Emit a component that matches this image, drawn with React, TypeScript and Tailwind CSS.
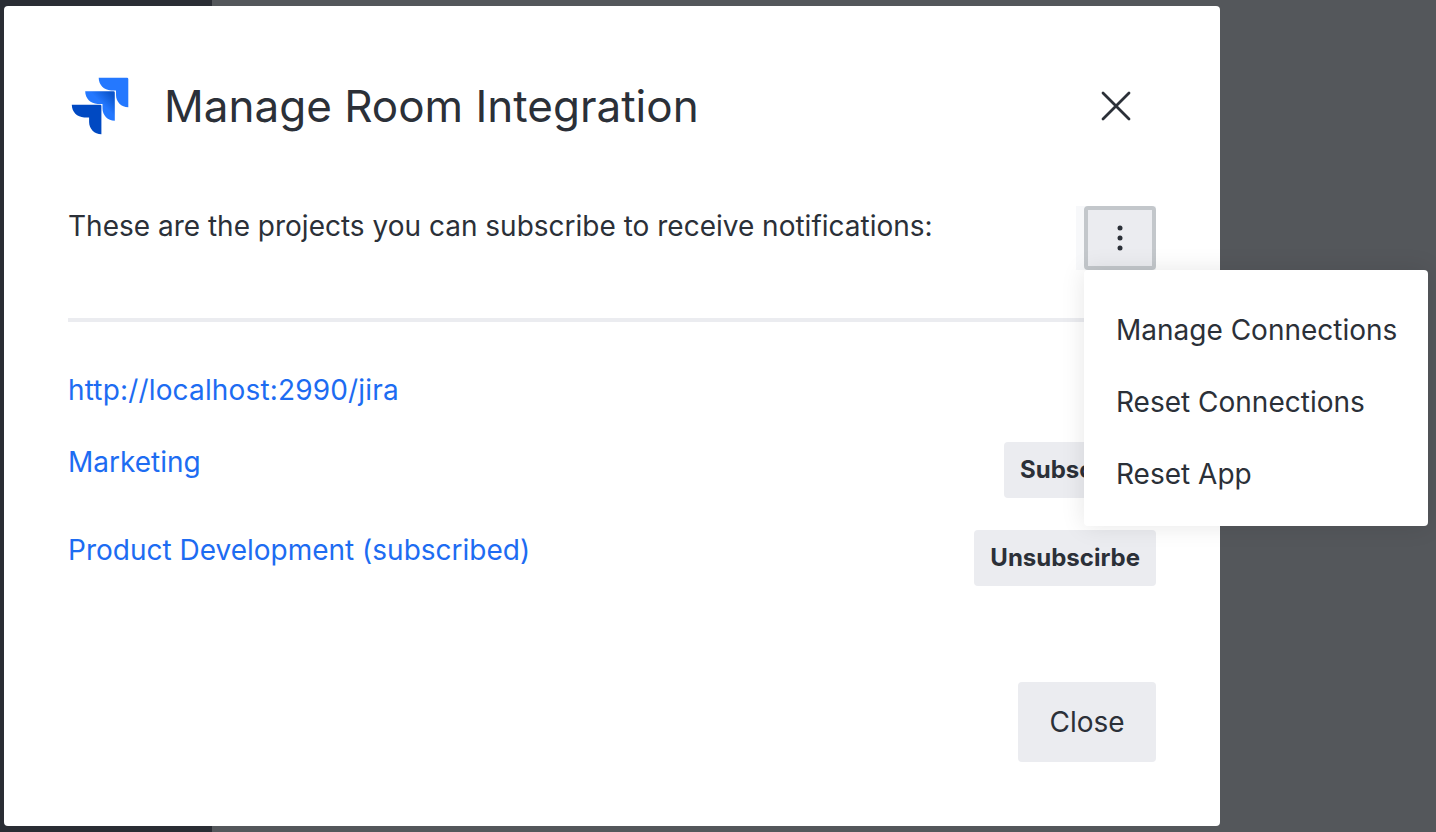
import type { ReactNode } from "react";

const ARROW = "M0 0H28.3A1.3 1.3 0 0 1 29.6 1.3V29.4C22.6 29.4 17.3 24 17.3 17.2V12.6H12.4C5.4 12.6 0 7 0 0Z";

function JiraLogo() {
  return (
    <svg width="64" height="64" viewBox="0 0 64 64" className="shrink-0">
      <defs>
        <linearGradient id="mid" x1="28" y1="2" x2="16" y2="14" gradientUnits="userSpaceOnUse">
          <stop offset="0.1" stopColor="#0B55CB" />
          <stop offset="0.9" stopColor="#2478FF" />
        </linearGradient>
      </defs>
      <path d={ARROW} transform="translate(30.7 3.8)" fill="#2478FF" />
      <path d={ARROW} transform="translate(17.2 17.3)" fill="url(#mid)" />
      <path d={ARROW} transform="translate(3.8 30.8)" fill="#0049C2" />
    </svg>
  );
}

function SmallButton({ children }: { children: ReactNode }) {
  return (
    <button className="h-14 min-w-[152px] rounded-[4px] bg-[#ebecf0] px-4 text-left text-2xl font-bold whitespace-nowrap">{children}</button>
  );
}

function ProjectRow({ name, action }: { name: string; action: string }) {
  return (
    <div className="flex h-[88px] items-start justify-between">
      <a className="leading-10 text-[#1d6cf2]">{name}</a>
      <SmallButton>{action}</SmallButton>
    </div>
  );
}

const menu = ["Manage Connections", "Reset Connections", "Reset App"];

export default function App() {
  return (
    <div className="relative flex h-[832px] w-[1436px] overflow-hidden bg-[#54575b] font-['Inter',sans-serif] text-[28px] text-[#2b3038]">
      <div className="w-[212px] shrink-0 bg-[#2a2d34]" />
      <div className="absolute top-[6px] left-1 flex h-[820px] w-[1216px] flex-col rounded-[4px] bg-white px-16 pt-[68px] pb-16">
        <header className="flex h-16 items-center">
          <JiraLogo />
          <h1 className="ml-8 flex-1 text-[44px] leading-[64px] whitespace-nowrap">Manage Room Integration</h1>
          <button className="mr-6 flex h-16 w-8 items-center justify-center" aria-label="Close dialog">
            <svg width="32" height="32" viewBox="0 0 32 32" fill="none" stroke="#2b3038" strokeWidth="2.8" strokeLinecap="round">
              <path d="M3 3L29 29M29 3L3 29" />
            </svg>
          </button>
        </header>
        <section className="mt-[68px] flex h-[64px] items-start justify-between">
          <p className="leading-10 whitespace-nowrap">These are the projects you can subscribe to receive notifications:</p>
          <div className="bg-[#f7f8fa] pl-2">
            <button className="flex h-16 w-[72px] items-center justify-center rounded-[4px] border-4 border-[#c3c7cb] bg-[#ebecf0]" aria-label="Options">
              <svg width="8" height="28" viewBox="0 0 8 28" fill="#2b3038">
                <circle cx="4" cy="4" r="2.5" />
                <circle cx="4" cy="14" r="2.5" />
                <circle cx="4" cy="24" r="2.5" />
              </svg>
            </button>
          </div>
        </section>
        <hr className="mt-12 border-0 border-t-4 border-[#ebecf0]" />
        <a className="mt-12 mb-8 leading-10 tracking-[0.16px] text-[#1d6cf2]">http://localhost:2990/jira</a>
        <ProjectRow name="Marketing" action="Subscribe" />
        <ProjectRow name="Product Development (subscribed)" action="Unsubscirbe" />
        <footer className="mt-auto flex justify-end">
          <button className="h-20 w-[138px] rounded-[4px] bg-[#ebecf0]">Close</button>
        </footer>
      </div>
      <ul className="absolute top-[270px] left-[1084px] h-[256px] w-[344px] rounded-[4px] bg-white px-8 pt-6 shadow-[0_0_24px_rgba(0,0,0,0.1)]">
        {menu.map((item) => (
          <li key={item} className="h-[72px] leading-[72px] whitespace-nowrap">{item}</li>
        ))}
      </ul>
    </div>
  );
}
